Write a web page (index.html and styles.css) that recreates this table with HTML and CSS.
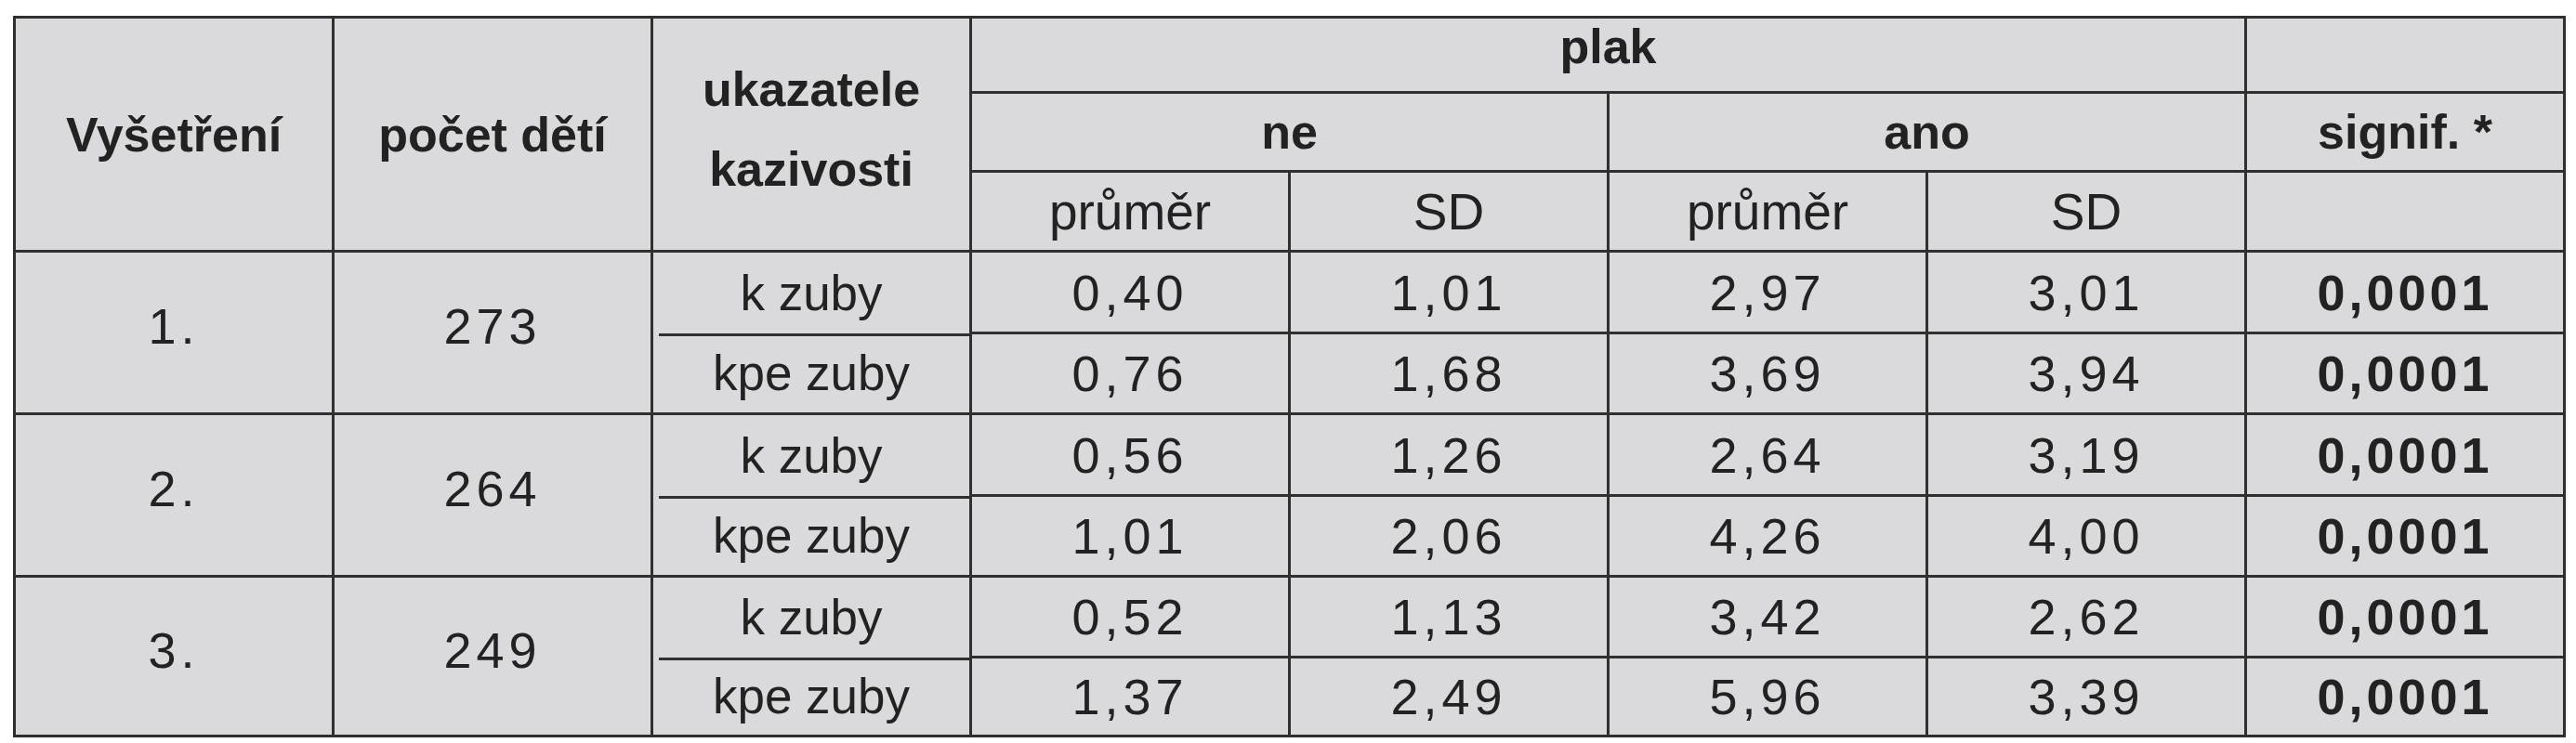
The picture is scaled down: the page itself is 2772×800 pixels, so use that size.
FILE: index.html
```html
<!DOCTYPE html>
<html lang="cs">
<head>
<meta charset="utf-8">
<title>Kazivost a plak</title>
<link rel="stylesheet" href="styles.css">
</head>
<body>
<table class="stats">
  <colgroup>
    <col class="col"><col class="col"><col class="col"><col class="col">
    <col class="col"><col class="col"><col class="col"><col class="col">
  </colgroup>
  <thead>
    <tr class="h1">
      <th rowspan="3" class="hd">Vyšetření</th>
      <th rowspan="3" class="hd">počet dětí</th>
      <th rowspan="3" class="hd multi">ukazatele<br>kazivosti</th>
      <th colspan="4" class="hd plak">plak</th>
      <th class="blank"></th>
    </tr>
    <tr class="h2">
      <th colspan="2" class="hd">ne</th>
      <th colspan="2" class="hd">ano</th>
      <th class="hd">signif. *</th>
    </tr>
    <tr class="h3">
      <th class="sub">průměr</th>
      <th class="sub">SD</th>
      <th class="sub">průměr</th>
      <th class="sub">SD</th>
      <th class="blank"></th>
    </tr>
  </thead>
  <tbody>
    <tr class="ra r1a">
      <td rowspan="2" class="num grp">1.</td>
      <td rowspan="2" class="num grp">273</td>
      <td class="lbl">k zuby</td>
      <td class="num">0,40</td><td class="num">1,01</td><td class="num">2,97</td><td class="num">3,01</td>
      <td class="num sig">0,0001</td>
    </tr>
    <tr class="rb r1b">
      <td class="lbl">kpe zuby</td>
      <td class="num">0,76</td><td class="num">1,68</td><td class="num">3,69</td><td class="num">3,94</td>
      <td class="num sig">0,0001</td>
    </tr>
    <tr class="ra r2a">
      <td rowspan="2" class="num grp">2.</td>
      <td rowspan="2" class="num grp">264</td>
      <td class="lbl">k zuby</td>
      <td class="num">0,56</td><td class="num">1,26</td><td class="num">2,64</td><td class="num">3,19</td>
      <td class="num sig">0,0001</td>
    </tr>
    <tr class="rb r2b">
      <td class="lbl">kpe zuby</td>
      <td class="num">1,01</td><td class="num">2,06</td><td class="num">4,26</td><td class="num">4,00</td>
      <td class="num sig">0,0001</td>
    </tr>
    <tr class="ra r3a">
      <td rowspan="2" class="num grp">3.</td>
      <td rowspan="2" class="num grp">249</td>
      <td class="lbl">k zuby</td>
      <td class="num">0,52</td><td class="num">1,13</td><td class="num">3,42</td><td class="num">2,62</td>
      <td class="num sig">0,0001</td>
    </tr>
    <tr class="rb r3b">
      <td class="lbl">kpe zuby</td>
      <td class="num">1,37</td><td class="num">2,49</td><td class="num">5,96</td><td class="num">3,39</td>
      <td class="num sig">0,0001</td>
    </tr>
  </tbody>
</table>
</body>
</html>
```

FILE: styles.css
```css
html, body {
  margin: 0;
  padding: 0;
  background: #ffffff;
}

body {
  font-family: "Liberation Sans", Arial, sans-serif;
  color: #222222;
}

.stats {
  margin: 17px 0 0 14px;
  width: 2747px;
  table-layout: fixed;
  border-collapse: collapse;
  background: #dadadc;
  border: 3px solid #2a2a2a;
}

.col {
  width: 343px;
}

.stats th,
.stats td {
  border: 3px solid #303030;
  padding: 0;
  text-align: center;
  vertical-align: middle;
  background: #dadadc;
  white-space: nowrap;
}

.h1 { height: 79px; }
.h2 { height: 85px; }
.h3 { height: 86px; }
.r1a { height: 88px; }
.r1b { height: 87px; }
.r2a { height: 88px; }
.r2b { height: 87px; }
.r3a { height: 87px; }
.r3b { height: 85px; }

.hd {
  font-weight: bold;
  font-size: 52px;
  padding-bottom: 8px;
}

.hd.plak {
  padding-bottom: 18px;
}

.hd.multi {
  line-height: 86px;
  padding-bottom: 12px;
}

.sub {
  font-weight: normal;
  font-size: 55px;
  padding-bottom: 6px;
}

.lbl {
  font-size: 53px;
  padding-bottom: 4px;
}

.num {
  font-size: 54px;
  letter-spacing: 5px;
  padding-left: 5px;
  padding-bottom: 4px;
}

.num.grp {
  padding-bottom: 14px;
}

.num.sig {
  font-weight: bold;
  letter-spacing: 4px;
}

/* the split line between "k zuby" and "kpe zuby" leaves a small gap on the left */
.ra .lbl {
  border-bottom-style: none;
}

.rb .lbl {
  border-top-style: none;
  background-image: linear-gradient(#303030, #303030);
  background-repeat: no-repeat;
  background-position: 6px 0;
  background-size: calc(100% - 6px) 3px;
}
```
